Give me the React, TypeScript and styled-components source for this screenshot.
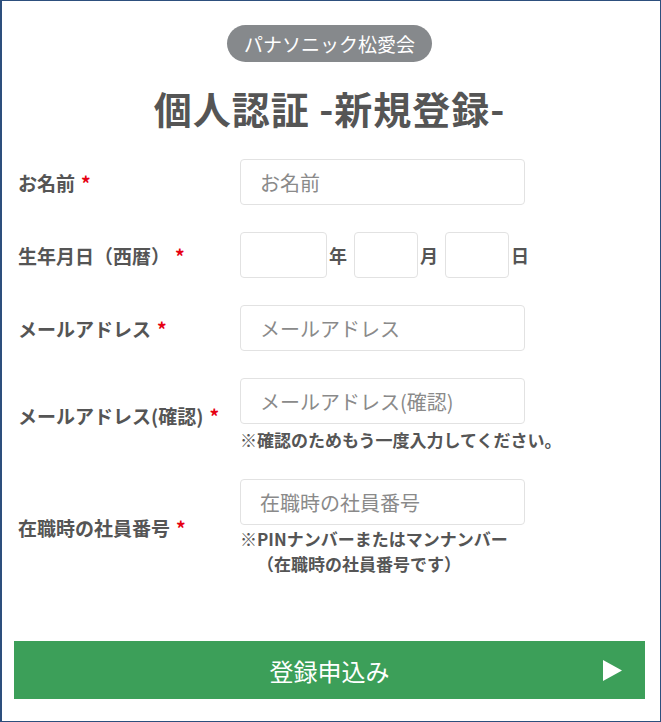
import React from "react";
import styled, { createGlobalStyle } from "styled-components";

const GlobalStyle = createGlobalStyle`
  html, body { margin: 0; padding: 0; background: #fff; }
  body { font-family: "Noto Sans CJK JP", "Noto Sans", sans-serif; }
  * { box-sizing: border-box; }
`;

const Frame = styled.div`
  width: 661px;
  height: 722px;
  border: 1px solid #2d4f7d;
  border-left-width: 2px;
  padding: 24px 15px 0 12px;
  display: flex;
  flex-direction: column;
  background: #fff;
`;

const Header = styled.header`
  display: flex;
  flex-direction: column;
  align-items: center;
`;

const Badge = styled.div`
  display: inline-flex;
  align-items: center;
  justify-content: center;
  height: 37px;
  padding: 0 17px;
  border-radius: 19px;
  background: #86898c;
  color: #fff;
  font-size: 19px;
  line-height: 1;
`;

const Title = styled.h1`
  margin: 23px 0 0;
  font-size: 38px;
  line-height: 45px;
  font-weight: 700;
  color: #555;
  letter-spacing: 1px;
`;

const Form = styled.form`
  margin-top: 29px;
  display: flex;
  flex-direction: column;
  gap: 27px;
`;

const Row = styled.div`
  display: grid;
  grid-template-columns: 226px 1fr;
  align-items: center;
`;

const Label = styled.label`
  padding-left: 4px;
  font-size: 19px;
  font-weight: 700;
  color: #555;
  white-space: nowrap;
`;

const Req = styled.span<{ $gap?: number }>`
  color: #e60012;
  margin-left: ${(p) => p.$gap ?? 6}px;
`;

const Field = styled.div`
  display: flex;
  flex-direction: column;
`;

const Input = styled.input<{ $w?: number }>`
  width: ${(p) => p.$w ?? 285}px;
  height: 46px;
  border: 1px solid #e2e2e2;
  border-radius: 4px;
  padding: 0 19px;
  font-family: inherit;
  font-size: 20px;
  color: #333;
  background: #fff;
  outline: none;
  &::placeholder { color: #8a8a8a; }
`;

const DateLine = styled.div`
  display: flex;
  align-items: center;
`;

const Unit = styled.span`
  font-size: 18px;
  font-weight: 700;
  color: #555;
  margin: 0 7px 0 2px;
`;

const Note = styled.p<{ $top?: number }>`
  margin: ${(p) => p.$top ?? 3}px 0 0;
  font-size: 17px;
  line-height: 25px;
  font-weight: 700;
  color: #555;
  white-space: nowrap;
`;

const Indent = styled.span`
  display: block;
  padding-left: 17px;
`;

const Submit = styled.button`
  margin-top: 65px;
  width: 631px;
  height: 58px;
  border: 0;
  background: #3c9f59;
  color: #fff;
  font-family: inherit;
  font-size: 24px;
  display: grid;
  grid-template-columns: 1fr auto 1fr;
  align-items: center;
  padding: 0 23px;
  cursor: pointer;
`;

const SubmitText = styled.span`
  grid-column: 2;
`;

const Arrow = styled.svg`
  grid-column: 3;
  justify-self: end;
`;

export default function App() {
  return (
    <>
      <GlobalStyle />
      <Frame>
        <Header>
          <Badge>パナソニック松愛会</Badge>
          <Title>個人認証 -新規登録-</Title>
        </Header>
        <Form onSubmit={(e) => e.preventDefault()}>
          <Row>
            <Label>
              お名前<Req>*</Req>
            </Label>
            <Field>
              <Input placeholder="お名前" />
            </Field>
          </Row>
          <Row>
            <Label>
              生年月日（西暦）<Req $gap={5}>*</Req>
            </Label>
            <DateLine>
              <Input $w={87} />
              <Unit>年</Unit>
              <Input $w={64} />
              <Unit>月</Unit>
              <Input $w={64} />
              <Unit>日</Unit>
            </DateLine>
          </Row>
          <Row>
            <Label>
              メールアドレス<Req>*</Req>
            </Label>
            <Field>
              <Input placeholder="メールアドレス" />
            </Field>
          </Row>
          <Row>
            <Label>
              メールアドレス(確認)<Req>*</Req>
            </Label>
            <Field>
              <Input placeholder="メールアドレス(確認)" />
              <Note>※確認のためもう一度入力してください。</Note>
            </Field>
          </Row>
          <Row>
            <Label>
              在職時の社員番号<Req>*</Req>
            </Label>
            <Field>
              <Input placeholder="在職時の社員番号" />
              <Note $top={1}>
                ※PINナンバーまたはマンナンバー
                <Indent>（在職時の社員番号です）</Indent>
              </Note>
            </Field>
          </Row>
        </Form>
        <Submit type="submit">
          <SubmitText>登録申込み</SubmitText>
          <Arrow width="19" height="21" viewBox="0 0 19 21">
            <polygon points="0,0 19,10.5 0,21" fill="#fff" />
          </Arrow>
        </Submit>
      </Frame>
    </>
  );
}
